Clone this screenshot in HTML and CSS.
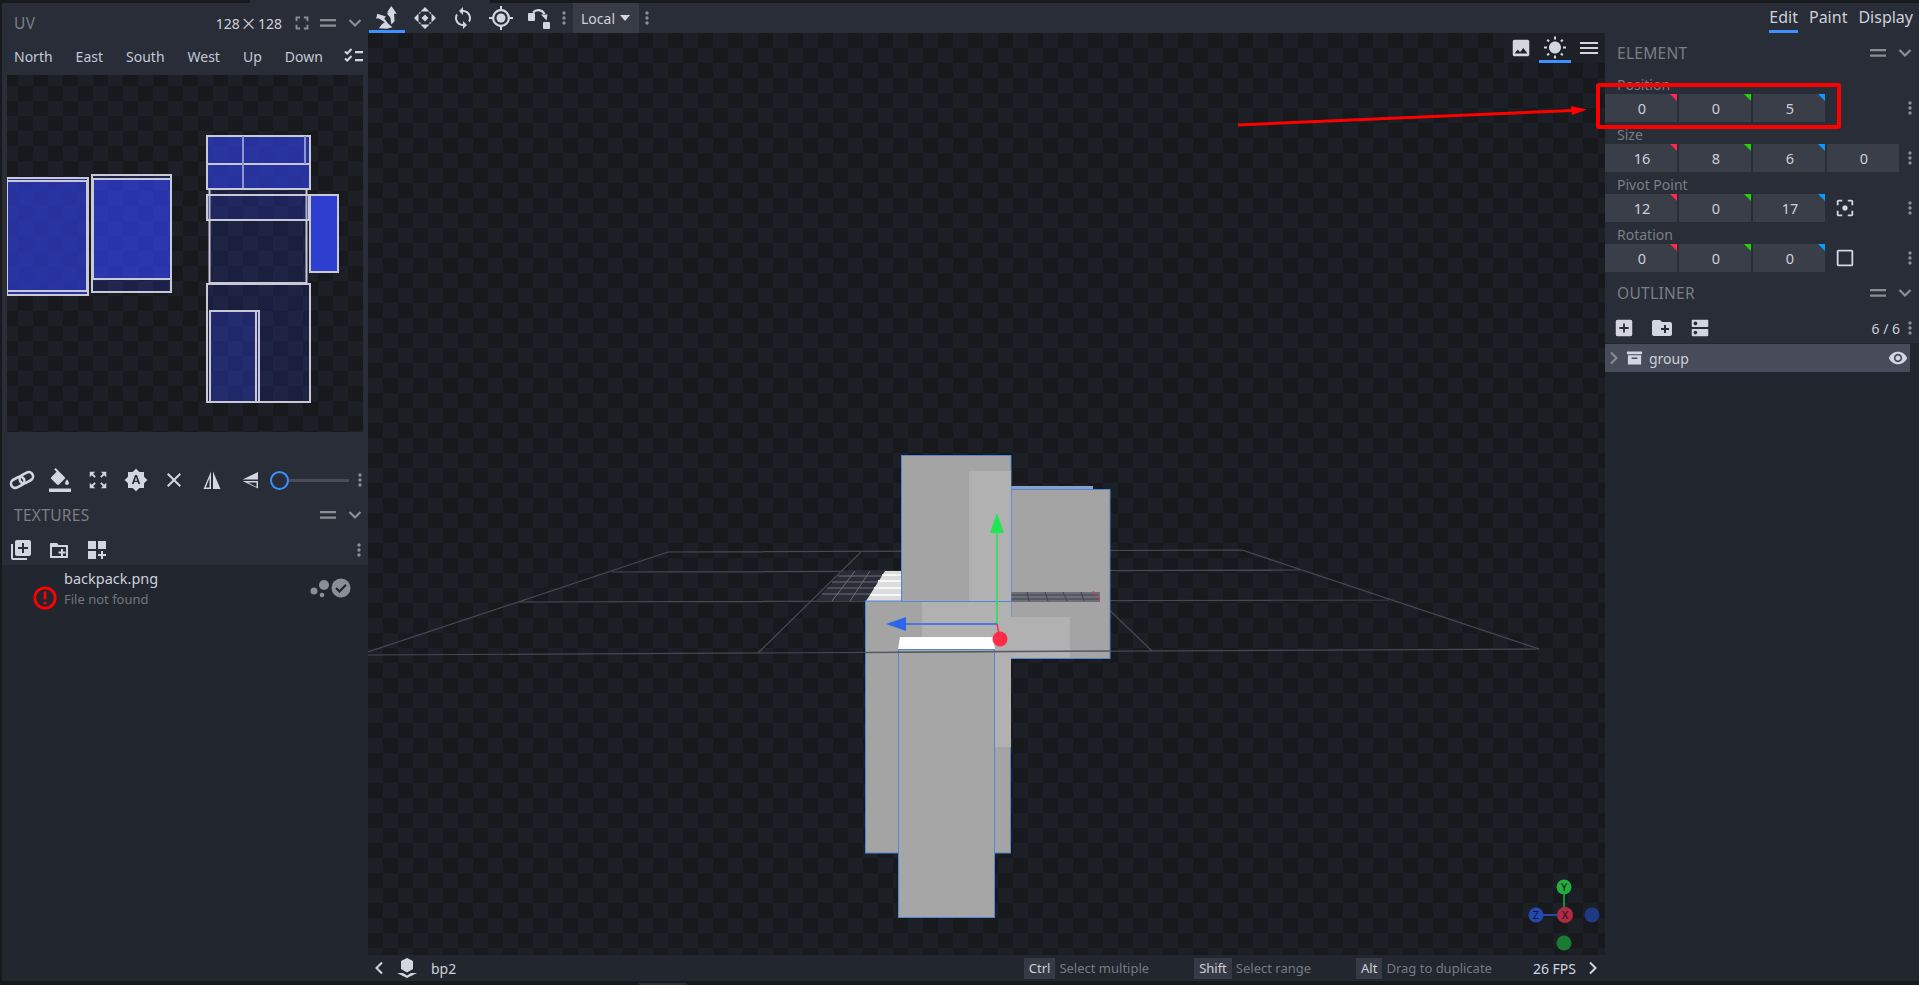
FILE: index.html
```html
<!DOCTYPE html>
<html lang="en">
<head>
<meta charset="utf-8">
<title>Blockbench</title>
<link rel="stylesheet" href="styles.css">
</head>
<body>
<svg class="defs" width="0" height="0" aria-hidden="true">
  <symbol id="dots" viewBox="0 0 24 24"><path d="M12 8c1.100 0 2-.9 2-2s-.9-2-2-2-2 .9-2 2 .9 2 2 2zm0 2c-1.100 0-2 .9-2 2s.9 2 2 2 2-.9 2-2-.9-2-2-2zm0 6c-1.100 0-2 .9-2 2s.9 2 2 2 2-.9 2-2-.9-2-2-2z"/></symbol>
  <symbol id="handle" viewBox="0 0 18 18"><path d="M1 5h16v2.200H1zM1 10.500h16v2.200H1z"/></symbol>
  <symbol id="chev" viewBox="0 0 14 14"><path d="M1.500 4l5.500 5.500L12.500 4" fill="none" stroke="currentColor" stroke-width="2.200"/></symbol>
</svg>

<div class="topstrip"><span class="strip-a"></span><span class="strip-b"></span></div>

<div class="app">
  <aside class="side side-left">
    <div class="head">
      <span class="title">UV</span>
      <span class="uvsize">128 ⨉ 128</span>
      <svg class="ic i-sub" width="22" height="22" viewBox="0 0 24 24"><path d="M7 14H5v5h5v-2H7v-3zm-2-4h2V7h3V5H5v5zm12 7h-3v2h5v-5h-2v3zM14 5v2h3v3h2V5h-5z"/></svg>
      <svg class="ic i-sub hd-handle" width="18" height="18"><use href="#handle"/></svg>
      <svg class="i-sub hd-chev" width="14" height="14"><use href="#chev"/></svg>
    </div>
    <div class="faces">
      <span>North</span><span>East</span><span>South</span><span>West</span><span>Up</span><span>Down</span>
      <svg class="i-list" width="20" height="16" viewBox="0 0 20 16"><path d="M1 3.500l2.200 2L7.500 1M1 10.500l2.200 2L7.500 8" fill="none" stroke="currentColor" stroke-width="2"/><path d="M11 3h8v2.200h-8zM11 11h8v2.200h-8z" fill="currentColor"/></svg>
    </div>
    <div class="uvcanvas checker">
      <svg class="uvsvg" width="356" height="357" viewBox="7 75 356 357">
        <g class="uv">
          <rect class="f1" x="7" y="178" width="81" height="117"/>
          <rect class="f1n" x="7" y="181" width="80" height="110"/>
          <rect class="f2" x="92" y="175" width="79" height="117"/>
          <rect class="f1" x="93" y="179" width="78" height="100"/>
          <rect class="f1" x="207" y="136" width="103" height="28"/>
          <rect class="f1" x="207" y="164" width="103" height="25"/>
          <path class="thin" d="M243 136v53M305 136v28"/>
          <rect class="f3" x="209.500" y="189" width="97" height="94"/>
          <rect class="f3" x="207" y="195" width="102" height="25"/>
          <rect class="f4" x="310" y="195" width="28" height="77"/>
          <rect class="f3" x="207" y="284" width="103" height="118"/>
          <rect class="f5" x="210" y="311" width="49" height="91"/>
          <path class="line" d="M256 311v91"/>
        </g>
      </svg>
    </div>
    <div class="tools tools-uv">
      <button class="tb"><svg class="ic" width="26" height="26" viewBox="0 0 24 24"><g fill="none" stroke="currentColor" stroke-width="2.400" transform="rotate(-28 12 12)"><rect x="1" y="8" width="13" height="8" rx="4"/><rect x="10" y="8" width="13" height="8" rx="4"/></g></svg></button>
      <button class="tb"><svg class="ic" width="24" height="24" viewBox="0 0 24 24"><path d="M16.560 8.940L7.620 0 6.210 1.410l2.380 2.380-5.150 5.150c-.59.59-.59 1.540 0 2.120l5.500 5.500c.29.29.68.44 1.060.44s.77-.15 1.060-.44l5.500-5.500c.59-.58.59-1.530 0-2.120zM19 11.500s-2 2.170-2 3.500c0 1.100.9 2 2 2s2-.9 2-2c0-1.330-2-3.500-2-3.500zM1 20.500h22V24H1z"/></svg></button>
      <button class="tb"><svg class="ic" width="22" height="22" viewBox="0 0 24 24"><path d="M15 3l2.300 2.300-2.890 2.870 1.420 1.420L18.700 6.700 21 9V3zM3 9l2.300-2.300 2.870 2.890 1.420-1.420L6.700 5.300 9 3H3zm6 12l-2.300-2.300 2.890-2.870-1.420-1.420L5.300 17.300 3 15v6zm12-6l-2.300 2.300-2.870-2.890-1.420 1.420 2.890 2.870L15 21h6z"/></svg></button>
      <button class="tb"><svg class="ic" width="24" height="24" viewBox="0 0 24 24"><path fill-rule="evenodd" d="M20 8.690V4h-4.690L12 .69 8.690 4H4v4.690L.69 12 4 15.310V20h4.690L12 23.310 15.310 20H20v-4.690L23.310 12 20 8.690zM10.850 12.650h2.300L12 9l-1.150 3.650zM14.300 16l-.7-2h-3.200l-.7 2H7.800L11 7h2l3.200 9h-1.900z"/></svg></button>
      <button class="tb"><svg class="ic" width="24" height="24" viewBox="0 0 24 24"><path d="M19 6.410L17.590 5 12 10.590 6.410 5 5 6.410 10.590 12 5 17.590 6.410 19 12 13.410 17.590 19 19 17.590 13.410 12z"/></svg></button>
      <button class="tb"><svg class="ic" width="22" height="22" viewBox="0 0 22 22"><path d="M10 2.500V20H2.500zM8.500 9L4.800 18.500h3.700z" fill-rule="evenodd"/><path d="M12 2.500L19.500 20H12z"/></svg></button>
      <button class="tb"><svg class="ic" width="22" height="22" viewBox="0 0 22 22"><path d="M19 3v7.500H3.500z"/><path d="M3.500 12H19v7.500zM17.500 13.500H9l8.500 4.500z" fill-rule="evenodd"/></svg></button>
      <div class="slider"><span class="knob"></span><span class="track"></span></div>
      <svg class="ic i-sub dots" width="20" height="20"><use href="#dots"/></svg>
    </div>
    <div class="head head-sec">
      <span class="title">TEXTURES</span>
      <svg class="ic i-sub hd-handle" width="18" height="18"><use href="#handle"/></svg>
      <svg class="i-sub hd-chev" width="14" height="14"><use href="#chev"/></svg>
    </div>
    <div class="tools tools-tx">
      <button class="tb"><svg class="ic" width="24" height="24" viewBox="0 0 24 24"><path d="M4 6H2v14c0 1.100.9 2 2 2h14v-2H4V6zm16-4H8c-1.100 0-2 .9-2 2v12c0 1.100.9 2 2 2h12c1.100 0 2-.9 2-2V4c0-1.100-.9-2-2-2zm-1 9h-4v4h-2v-4H9V9h4V5h2v4h4v2z"/></svg></button>
      <button class="tb"><svg class="ic" width="20" height="20" viewBox="0 0 20 20"><path fill-rule="evenodd" d="M2 3h6l1.500 2H18c.6 0 1 .4 1 1v11c0 .6-.4 1-1 1H2c-.6 0-1-.4-1-1V4c0-.6.4-1 1-1zm1 4v9h14V7zm9 2h2v2.500h2.500v2H14V16h-2v-2.500H9.500v-2H12z"/></svg></button>
      <button class="tb"><svg class="ic" width="20" height="20" viewBox="0 0 20 20"><path d="M1 1h8v8H1zM11 1h8v8h-8zM1 11h8v8H1zM14 11h2v3h3v2h-3v3h-2v-3h-3v-2h3z"/></svg></button>
      <svg class="ic i-sub dots dots-end" width="20" height="20"><use href="#dots"/></svg>
    </div>
    <div class="list">
      <div class="texture">
        <svg class="err" width="24" height="24" viewBox="0 0 24 24"><circle cx="12" cy="12" r="10.200" fill="none" stroke="#f00" stroke-width="2.800"/><path d="M10.700 5.500h2.600v8h-2.600zM10.700 15.800h2.600v2.700h-2.600z" fill="#f00"/></svg>
        <div class="txt">
          <div class="name">backpack.png</div>
          <div class="sub">File not found</div>
        </div>
        <svg class="tx-ic" width="42" height="22" viewBox="0 0 42 22"><g fill="#8b8e96"><circle cx="4" cy="13" r="3.500"/><circle cx="14" cy="7" r="5"/><circle cx="12" cy="17" r="2.300"/><circle cx="31" cy="10" r="9.500"/></g><path d="M26 10l3.500 3.500L36 6.800" fill="none" stroke="#22262e" stroke-width="2.200"/></svg>
      </div>
    </div>
  </aside>

  <main class="center">
    <div class="toolbar">
      <button class="tool active"><svg class="ic" width="26" height="26" viewBox="0 0 24 24"><path d="M16 1l5 7h-2.500l.5 7-3 3-1-6.500-3-3.500 1.500-1.500L12 7zM3 8l8 2.500-1.500 2L13 17l4 3.500-5 1.500-7.500-.5 3-4L10 16l-5.500-3.500H2z"/></svg></button>
      <button class="tool"><svg class="ic" width="24" height="24" viewBox="0 0 24 24"><path d="M12 1l4.500 4.500h-9zM12 23l-4.500-4.500h9zM1 12l4.500-4.500v9zM23 12l-4.500 4.500v-9zM12 8.500l3.500 3.500-3.500 3.500L8.500 12zM8 6.800l-1.300 1.300L5.800 7l1-1zM16 6.800l1.300 1.300L18.200 7l-1-1zM8 17.200l-1.300-1.300-.9 1.100 1 1zM16 17.200l1.300-1.300.9 1.100-1 1z"/></svg></button>
      <button class="tool"><svg class="ic" width="24" height="24" viewBox="0 0 24 24"><path d="M12 4V1L8 5l4 4V6c3.310 0 6 2.690 6 6 0 1.010-.25 1.970-.7 2.800l1.460 1.460C19.540 15.030 20 13.570 20 12c0-4.420-3.580-8-8-8zm0 14c-3.310 0-6-2.690-6-6 0-1.010.25-1.970.7-2.800L5.240 7.740C4.460 8.970 4 10.430 4 12c0 4.420 3.580 8 8 8v3l4-4-4-4v3z"/></svg></button>
      <button class="tool"><svg class="ic" width="24" height="24" viewBox="0 0 24 24"><path fill-rule="evenodd" d="M11 0h2v3.100a9 9 0 0 1 7.900 7.900H24v2h-3.100a9 9 0 0 1-7.900 7.900V24h-2v-3.100A9 9 0 0 1 3.100 13H0v-2h3.100A9 9 0 0 1 11 3.100zM12 5.200a6.800 6.800 0 1 0 0 13.600 6.800 6.800 0 0 0 0-13.600z"/><circle cx="12" cy="12" r="4.500"/></svg></button>
      <button class="tool"><svg class="ic" width="24" height="24" viewBox="0 0 24 24"><rect x="1" y="7" width="7" height="8" rx="1"/><rect x="16" y="16" width="7" height="7" rx="1"/><path d="M6 6.500C9 3 15 3 17.500 8" fill="none" stroke="currentColor" stroke-width="2.200"/><path d="M14 8.500l6.500 0-1 6z"/></svg></button>
      <svg class="ic i-sub dots" width="20" height="20"><use href="#dots"/></svg>
      <div class="select">Local<span class="caret"></span></div>
      <svg class="ic i-sub dots" width="20" height="20"><use href="#dots"/></svg>
    </div>

    <div class="viewport checker">
      <svg class="scene" width="1237" height="922" viewBox="368 33 1237 922">
        <g class="gridlines">
          <path d="M668 552L1242 550M612 572L1300 570M517 602L1389 600M368 652L668 552M1539 649L1242 550M758 653L861 552M1152 651L1100 601"/>
          <path class="grid-sep" d="M368 655L1539 649"/>
        </g>
        <polygon points="815,601 843,571 885,571 866,601" fill="#2a2d36"/>
        <path d="M822 594H870M827 588H874M832 582H878M838 576H882M832 601L855 571M850 601L870 571" stroke="#6b6e78" stroke-width="1"/>
        <polygon points="866,601 885,571 901,571 901,601" fill="#dcdcdc"/>
        <path d="M870 595H901M874 588H901M878 581H901M882 575H901" stroke="#f8f8f8" stroke-width="2"/>
        <rect x="1011" y="486" width="82" height="4" fill="#8aa0c8"/>
        <rect class="box" x="1011" y="489.500" width="99" height="169"/>
        <rect x="1011" y="617" width="59" height="41" fill="#b1b1b1"/>
        <rect x="1011" y="592" width="89" height="10" fill="#6c6f77"/>
        <path d="M1011 595H1098M1011 599H1100M1027 592L1029 601M1045 592L1048 601M1063 592L1067 601M1081 592L1084 601" stroke="#41444d" stroke-width="1"/>
        <path d="M1093 591L1100 600" stroke="#ff2c47" stroke-width="1"/>
        <rect class="box" x="865.500" y="601" width="145" height="252"/>
        <rect x="922" y="602" width="89" height="48" fill="#b1b1b1"/>
        <rect x="995" y="650" width="16" height="97" fill="#b1b1b1"/>
        <rect class="box" x="901.500" y="455.500" width="109.500" height="146"/>
        <rect x="969" y="471" width="42" height="130" fill="#b1b1b1"/>
        <polygon points="900,637 993,637 995,649 898,649" fill="#fff"/>
        <rect class="box box-front" x="898.500" y="649.500" width="96" height="268"/>
        <path d="M865 652.500L1110 651" stroke="#555862" stroke-width="1.500"/>
        <path d="M997 624L1000 639" stroke="#ff2c47" stroke-width="1.500"/>
        <path d="M997 533V624" stroke="#1ee650" stroke-width="1.500"/>
        <polygon points="997,513 990,533 1004,533" fill="#1ee650"/>
        <path d="M906 624H997" stroke="#2d66ee" stroke-width="1.500"/>
        <polygon points="886,624 906,617 906,631" fill="#2d66ee"/>
        <circle cx="1000" cy="639" r="7.500" fill="#ff2c47"/>
        <g class="axis">
          <path d="M1564 887V915" stroke="#1f8a36" stroke-width="2"/>
          <path d="M1536 915H1565" stroke="#2a49a8" stroke-width="2"/>
          <circle cx="1564" cy="943" r="7.500" fill="#1a7a32"/>
          <circle cx="1592" cy="915" r="7.500" fill="#1f3a84"/>
          <circle cx="1564" cy="887" r="7.500" fill="#22ad3e"/>
          <text x="1564" y="891">Y</text>
          <circle cx="1536" cy="915" r="7.500" fill="#2549b4"/>
          <text x="1536" y="919">Z</text>
          <circle cx="1565" cy="915" r="8" fill="#b02a42"/>
          <text x="1565" y="919">X</text>
        </g>
      </svg>
      <div class="presets">
        <button class="pre"><svg class="ic" width="22" height="22" viewBox="0 0 24 24"><path d="M21 19V5c0-1.100-.9-2-2-2H5c-1.100 0-2 .9-2 2v14c0 1.100.9 2 2 2h14c1.100 0 2-.9 2-2zM8.500 13.500l2.500 3.010L14.500 12l4.500 6H5l3.500-4.500z"/></svg></button>
        <button class="pre pre-on"><svg class="ic" width="24" height="24" viewBox="0 0 24 24"><path d="M6.760 4.840l-1.800-1.790-1.410 1.410 1.790 1.790 1.420-1.410zM4 10.500H1v2h3v-2zm9-9.950h-2V3.500h2V.55zm7.450 3.910l-1.410-1.410-1.790 1.790 1.410 1.410 1.790-1.790zm-3.210 13.700l1.790 1.800 1.410-1.410-1.800-1.790-1.400 1.400zM20 10.500v2h3v-2h-3zm-8-5c-3.310 0-6 2.690-6 6s2.690 6 6 6 6-2.690 6-6-2.690-6-6-6zm-1 16.950h2V19.500h-2v2.950zm-7.450-3.910l1.410 1.410 1.790-1.800-1.410-1.410-1.790 1.800z"/></svg></button>
        <button class="pre"><svg class="ic" width="24" height="24" viewBox="0 0 24 24"><path d="M3 18h18v-2H3v2zm0-5h18v-2H3v2zm0-7v2h18V6H3z"/></svg></button>
      </div>
    </div>

    <div class="status">
      <svg class="st-chev" width="12" height="14" viewBox="0 0 12 14"><path d="M9 1.500L3.500 7 9 12.500" fill="none" stroke="currentColor" stroke-width="2"/></svg>
      <svg class="ic st-model" width="22" height="22" viewBox="0 0 22 22"><path d="M11 1l6 3v8l-6 3.500L5 12V4zM1 16h6l4 2.500 4-2.500h6l-10 5z"/></svg>
      <span class="st-name">bp2</span>
      <div class="hints">
        <span class="hint"><kbd>Ctrl</kbd>Select multiple</span>
        <span class="hint"><kbd>Shift</kbd>Select range</span>
        <span class="hint"><kbd>Alt</kbd>Drag to duplicate</span>
      </div>
      <span class="fps">26 FPS</span>
      <svg class="st-chev" width="12" height="14" viewBox="0 0 12 14"><path d="M3 1.500L8.500 7 3 12.500" fill="none" stroke="currentColor" stroke-width="2"/></svg>
    </div>
  </main>

  <aside class="side side-right">
    <nav class="modes">
      <span class="mode on">Edit</span><span class="mode">Paint</span><span class="mode">Display</span>
    </nav>
    <div class="head head-r">
      <span class="title">ELEMENT</span>
      <svg class="ic i-sub hd-handle" width="18" height="18"><use href="#handle"/></svg>
      <svg class="i-sub hd-chev" width="14" height="14"><use href="#chev"/></svg>
    </div>
    <div class="field">
      <div class="label">Position</div>
      <div class="inputs">
        <span class="num x">0</span><span class="num y">0</span><span class="num z">5</span><span class="slot"></span>
        <svg class="ic i-sub more" width="20" height="20"><use href="#dots"/></svg>
      </div>
    </div>
    <div class="field">
      <div class="label">Size</div>
      <div class="inputs">
        <span class="num x">16</span><span class="num y">8</span><span class="num z">6</span><span class="num">0</span>
        <svg class="ic i-sub more" width="20" height="20"><use href="#dots"/></svg>
      </div>
    </div>
    <div class="field">
      <div class="label">Pivot Point</div>
      <div class="inputs">
        <span class="num x">12</span><span class="num y">0</span><span class="num z">17</span>
        <span class="slot"><svg class="ic" width="22" height="22" viewBox="0 0 24 24"><path d="M5 15H3v4c0 1.100.9 2 2 2h4v-2H5v-4zM5 5h4V3H5c-1.100 0-2 .9-2 2v4h2V5zm14-2h-4v2h4v4h2V5c0-1.100-.9-2-2-2zm0 16h-4v2h4c1.100 0 2-.9 2-2v-4h-2v4zM12 9c-1.660 0-3 1.340-3 3s1.340 3 3 3 3-1.340 3-3-1.340-3-3-3z"/></svg></span>
        <svg class="ic i-sub more" width="20" height="20"><use href="#dots"/></svg>
      </div>
    </div>
    <div class="field">
      <div class="label">Rotation</div>
      <div class="inputs">
        <span class="num x">0</span><span class="num y">0</span><span class="num z">0</span>
        <span class="slot"><svg class="ic" width="22" height="22" viewBox="0 0 24 24"><path d="M19 5v14H5V5h14m0-2H5c-1.100 0-2 .9-2 2v14c0 1.100.9 2 2 2h14c1.100 0 2-.9 2-2V5c0-1.100-.9-2-2-2z"/></svg></span>
        <svg class="ic i-sub more" width="20" height="20"><use href="#dots"/></svg>
      </div>
    </div>
    <div class="head head-r head-out">
      <span class="title">OUTLINER</span>
      <svg class="ic i-sub hd-handle" width="18" height="18"><use href="#handle"/></svg>
      <svg class="i-sub hd-chev" width="14" height="14"><use href="#chev"/></svg>
    </div>
    <div class="tools tools-out">
      <button class="tb"><svg class="ic" width="22" height="22" viewBox="0 0 24 24"><path d="M19 3H5c-1.110 0-2 .9-2 2v14c0 1.100.89 2 2 2h14c1.100 0 2-.9 2-2V5c0-1.100-.9-2-2-2zm-2 10h-4v4h-2v-4H7v-2h4V7h2v4h4v2z"/></svg></button>
      <button class="tb"><svg class="ic" width="24" height="24" viewBox="0 0 24 24"><path d="M20 6h-8l-2-2H4c-1.110 0-1.990.89-1.990 2L2 18c0 1.110.89 2 2 2h16c1.110 0 2-.89 2-2V8c0-1.110-.89-2-2-2zm-1 8h-3v3h-2v-3h-3v-2h3V9h2v3h3v2z"/></svg></button>
      <button class="tb"><svg class="ic" width="22" height="22" viewBox="0 0 24 24"><path d="M20 13H4c-.55 0-1 .45-1 1v6c0 .55.45 1 1 1h16c.55 0 1-.45 1-1v-6c0-.55-.45-1-1-1zM7 19c-1.100 0-2-.9-2-2s.9-2 2-2 2 .9 2 2-.9 2-2 2zM20 3H4c-.55 0-1 .45-1 1v6c0 .55.45 1 1 1h16c.55 0 1-.45 1-1V4c0-.55-.45-1-1-1zM7 9c-1.100 0-2-.9-2-2s.9-2 2-2 2 .9 2 2-.9 2-2 2z"/></svg></button>
      <span class="count">6 / 6</span>
      <svg class="ic i-sub more-out" width="20" height="20"><use href="#dots"/></svg>
    </div>
    <div class="list list-out">
      <div class="node">
        <svg class="i-sub node-chev" width="10" height="14" viewBox="0 0 10 14"><path d="M2 1.500L7.500 7 2 12.500" fill="none" stroke="currentColor" stroke-width="2"/></svg>
        <svg class="ic node-ic" width="17" height="16" viewBox="0 0 18 16"><path fill-rule="evenodd" d="M1 1h16v3H1zM2 5h14v10H2zM6 7.500v1.600h6V7.500z"/></svg>
        <span class="node-name">group</span>
        <svg class="ic node-eye" width="20" height="20" viewBox="0 0 24 24"><path d="M12 4.500C7 4.500 2.730 7.610 1 12c1.730 4.390 6 7.500 11 7.500s9.270-3.110 11-7.500c-1.730-4.390-6-7.500-11-7.500zM12 17c-2.760 0-5-2.240-5-5s2.240-5 5-5 5 2.240 5 5-2.240 5-5 5zm0-8c-1.660 0-3 1.340-3 3s1.340 3 3 3 3-1.340 3-3-1.340-3-3-3z"/></svg>
      </div>
    </div>
  </aside>
</div>

<div class="bottomstrip"><span class="tab-stub"></span></div>

<svg class="annotation" width="1919" height="985" viewBox="0 0 1919 985">
  <rect x="1598" y="85" width="241" height="42" fill="none" stroke="#f00" stroke-width="4" rx="1"/>
  <path d="M1238 125L1573 110.500" stroke="#f00" stroke-width="3"/>
  <polygon points="1571,106 1587,109.500 1572,115" fill="#f00"/>
</svg>
</body>
</html>
```

FILE: styles.css
```css
* { box-sizing: border-box; }
html, body { margin: 0; height: 100%; }
body {
  width: 1919px;
  height: 985px;
  overflow: hidden;
  position: relative;
  background: #17191d;
  color: #cdd0da;
  font-family: "Noto Sans", "Liberation Sans", sans-serif;
  font-size: 14px;
}
button {
  border: 0;
  padding: 0;
  background: none;
  color: inherit;
  font: inherit;
  display: flex;
  align-items: center;
  justify-content: center;
  flex: none;
}
svg { display: block; flex: none; }
.defs { position: absolute; }
.ic { fill: currentColor; color: #d3d6e0; }
.ic.i-sub, .i-sub { color: #8b8e95; }
.checker {
  background-color: #17191d;
  background-image: repeating-conic-gradient(#1c1f26 0 25%, #17191d 0 50%);
  background-size: 30px 30px;
}

.topstrip { height: 3px; display: flex; }
.strip-a { width: 250px; }
.strip-b { width: 240px; background: #292d37; }

.app {
  height: 978px;
  margin-left: 2px;
  display: grid;
  grid-template-columns: 366px 1237px 314px;
}
.bottomstrip { height: 4px; position: relative; padding: 2px 0 0 639px; }
.tab-stub { display: block; width: 48px; height: 2px; background: #2b2f38; }

.side { background: #292d37; display: flex; flex-direction: column; min-height: 0; }
.center { display: flex; flex-direction: column; min-height: 0; }

.head { height: 40px; display: flex; align-items: center; padding: 0 6px 0 12px; flex: none; }
.title { color: #7b7e85; font-size: 15.500px; letter-spacing: .3px; }
.uvsize { margin-left: auto; margin-right: 9px; font-size: 14px; color: #cdd0da; }
.hd-handle { margin-left: 6px; }
.hd-chev { margin-left: 11px; }
.head-sec .hd-handle { margin-left: auto; }
.head-r { height: 39px; padding: 0 7px 0 12px; }
.head-r .hd-handle { margin-left: auto; }
.head-out { height: 40px; margin-top: 1px; }

.faces { height: 32px; display: flex; align-items: center; padding: 0 0 6px 12px; flex: none; }
.faces span { font-size: 14px; color: #c3c8d8; margin-right: 23px; }
.faces span:nth-child(6) { margin-right: 21px; }
.i-list { color: #d3d6e0; }

.uvcanvas { width: 356px; height: 357px; margin: 0 0 0 5px; flex: none; background-position: -4px -4px; }
.uv rect { stroke: #c9c9d6; stroke-width: 2; fill: #3040e0; }
.uv .f1 { fill-opacity: .65; }
.uv .f1n { fill-opacity: .05; }
.uv .f2 { fill-opacity: .22; }
.uv .f3 { fill-opacity: .17; }
.uv .f4 { fill: #2e3fd0; }
.uv .f5 { fill-opacity: .28; }
.uv .thin { fill: none; stroke: #8e94cc; stroke-width: 2; }
.uv .line { fill: none; stroke: #c9c9d6; stroke-width: 2; }

.tools { display: flex; align-items: center; height: 30px; flex: none; }
.tools-uv { margin-top: 33px; padding-left: 1px; }
.tools-tx { padding-left: 0; }
.tb { width: 38px; height: 30px; }
.slider { display: flex; align-items: center; margin-left: 1px; width: 79px; flex: none; }
.knob { width: 19px; height: 19px; border: 2px solid #3e90ff; border-radius: 50%; flex: none; }
.track { flex: 1; height: 3px; background: #474b5a; }
.tools-uv .dots { margin-left: 1px; }
.dots-end { margin-left: auto; margin-right: -1px; }

.list { flex: 1; background: #22262e; }
.texture { display: flex; padding: 3px 0 0 31px; }
.err { margin-top: 18px; }
.txt { margin-left: 7px; }
.name { font-size: 14.500px; line-height: 20px; color: #cdd0da; }
.sub { font-size: 13px; line-height: 22px; color: #74777e; }
.tx-ic { margin: 10px 0 0 152px; }

.toolbar { height: 30px; background: #292d37; display: flex; align-items: center; flex: none; }
.tool { width: 38px; height: 30px; }
.tool.active { box-shadow: inset 0 -3px 0 #3e90ff; margin: 0 1px; width: 36px; }
.toolbar .dots { margin-left: -4px; }
.select {
  flex: none;
  width: 66px;
  height: 30px;
  margin-left: -1px;
  background: #383c47;
  display: flex;
  align-items: center;
  padding-left: 8px;
  font-size: 14px;
}
.caret {
  margin-left: 5px;
  width: 0;
  height: 0;
  border: 5.500px solid transparent;
  border-top: 6px solid #d3d6e0;
  border-bottom: 0;
}
.toolbar .select + .dots { margin-left: -2px; }

.viewport { flex: 1; position: relative; overflow: hidden; }
.scene { position: absolute; inset: 0; }
.gridlines path { fill: none; stroke: #464953; stroke-width: 1.200; }
.grid-sep { stroke: #4e515b; stroke-width: 1.500; }
.box { fill: #a4a4a4; stroke: #4f88d8; stroke-width: 1; }
.box-front { fill: #a6a6a6; }
.axis text { font: 11px "Noto Sans", sans-serif; fill: #14161a; text-anchor: middle; }
.presets {
  position: absolute;
  top: 0;
  right: 0;
  width: 101px;
  height: 30px;
  background: #1d2027;
  display: flex;
}
.pre { width: 34px; height: 30px; }
.pre-on { box-shadow: inset 0 -3px 0 #3e90ff; width: 32px; margin: 0 1px; }

.status { height: 26px; background: #22262e; display: flex; align-items: center; flex: none; font-size: 13px; }
.st-chev { color: #d3d6e0; }
.status > .st-chev:first-child { margin-left: 5px; }
.st-model { margin-left: 11px; }
.st-name { margin-left: 13px; font-size: 14px; }
.hints { margin-left: auto; display: flex; gap: 45px; color: #777a81; }
.hint { display: flex; align-items: center; height: 21px; }
kbd {
  font: inherit;
  color: #cdd0da;
  background: #363a45;
  height: 21px;
  line-height: 21px;
  padding: 0 5px;
  margin-right: 4px;
}
.fps { margin-left: 41px; margin-right: 11px; font-size: 14px; color: #d3d6e0; }
.status > .st-chev:last-child { margin-right: 6px; }

.modes { height: 30px; display: flex; justify-content: flex-end; gap: 11px; padding-right: 6px; flex: none; }
.mode { font-size: 16px; line-height: 28px; height: 30px; color: #cdd0da; }
.mode.on { box-shadow: inset 0 -3px 0 #3e90ff; }

.field { flex: none; height: 50px; }
.label { height: 22px; padding: 4px 0 0 12px; line-height: 18px; color: #7b7e85; font-size: 14px; }
.inputs { display: flex; gap: 2px; align-items: center; }
.num {
  position: relative;
  flex: none;
  width: 72px;
  height: 28px;
  line-height: 28px;
  padding-left: 2px;
  text-align: center;
  background: #3a3e49;
  font-size: 14.500px;
  color: #cdd0da;
}
.slot { flex: none; width: 72px; height: 28px; display: flex; align-items: center; padding-left: 7px; }
.more { margin-left: -1px; }
.num.x::after, .num.y::after, .num.z::after {
  content: "";
  position: absolute;
  top: 0;
  right: 0;
  border-style: solid;
  border-width: 0 7px 7px 0;
  border-color: transparent;
}
.num.x::after { border-right-color: #ff2850; }
.num.y::after { border-right-color: #23d400; }
.num.z::after { border-right-color: #0d9aff; }

.tools-out { height: 30px; }
.count { margin-left: auto; font-size: 14px; }
.more-out { margin-right: -1px; }
.list-out { padding-top: 1px; }
.node {
  height: 28px;
  width: 306px;
  margin-left: -1px;
  background: #474b5a;
  display: flex;
  align-items: center;
  padding-left: 5px;
}
.node-ic { margin-left: 7px; }
.node-name { margin-left: 6px; font-size: 14px; }
.node-eye { margin-left: auto; margin-right: 2px; }

.annotation { position: absolute; top: 0; left: 0; pointer-events: none; }
```
